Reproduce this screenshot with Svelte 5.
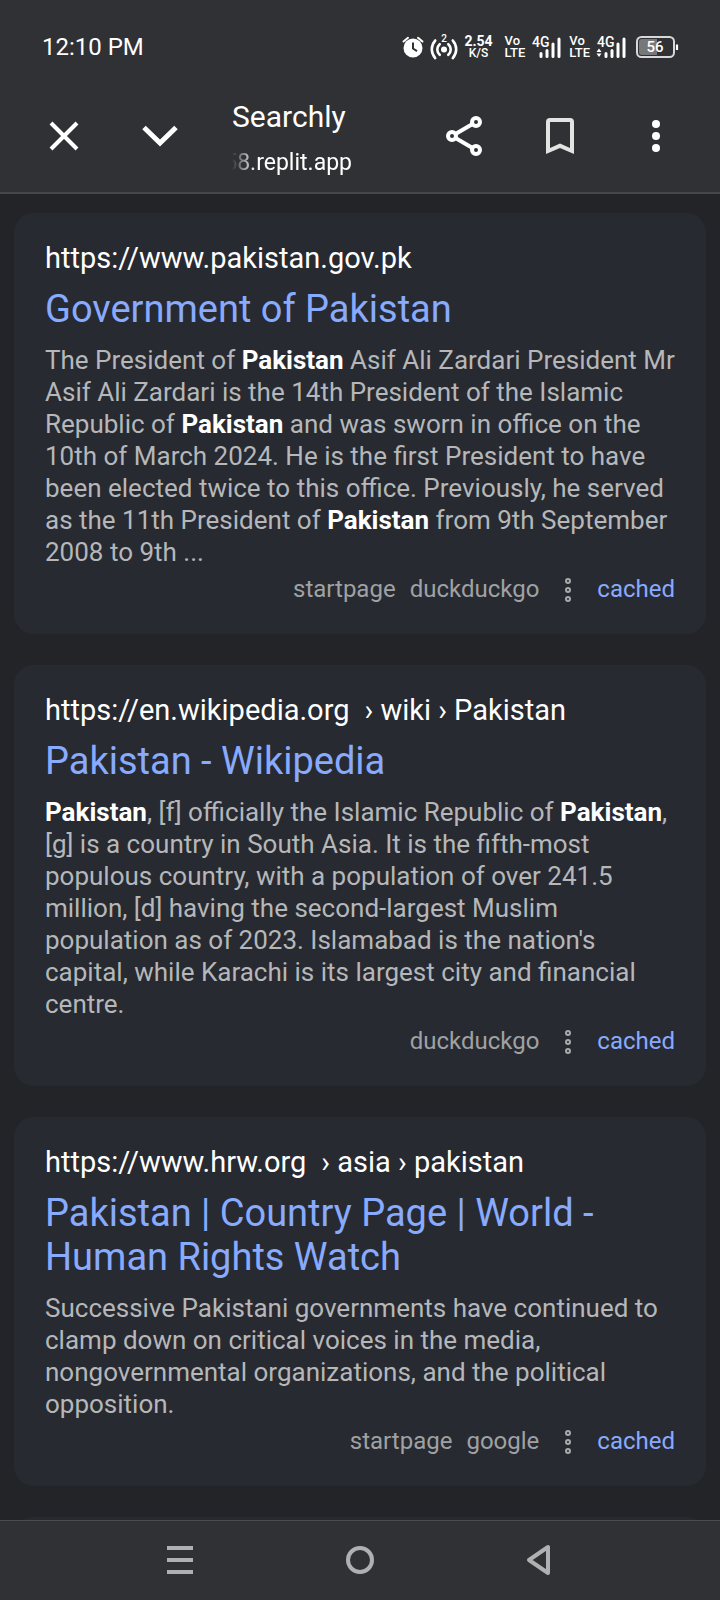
<!-- Search results page inside an in-app browser, with status and navigation bars -->
<script>
  const results = [
    {
      url: 'https://www.pakistan.gov.pk',
      path: '',
      title: 'Government of Pakistan',
      text: [
        { t: 'The President of ' },
        { t: 'Pakistan', hit: true },
        { t: ' Asif Ali Zardari President Mr Asif Ali Zardari is the 14th President of the Islamic Republic of ' },
        { t: 'Pakistan', hit: true },
        { t: ' and was sworn in office on the 10th of March 2024. He is the first President to have been elected twice to this office. Previously, he served as the 11th President of ' },
        { t: 'Pakistan', hit: true },
        { t: ' from 9th September 2008 to 9th ...' }
      ],
      engines: ['startpage', 'duckduckgo']
    },
    {
      url: 'https://en.wikipedia.org',
      path: '› wiki › Pakistan',
      title: 'Pakistan - Wikipedia',
      text: [
        { t: 'Pakistan', hit: true },
        { t: ', [f] officially the Islamic Republic of ' },
        { t: 'Pakistan', hit: true },
        { t: ", [g] is a country in South Asia. It is the fifth-most populous country, with a population of over 241.5 million, [d] having the second-largest Muslim population as of 2023. Islamabad is the nation's capital, while Karachi is its largest city and financial centre." }
      ],
      engines: ['duckduckgo']
    },
    {
      url: 'https://www.hrw.org',
      path: '› asia › pakistan',
      title: 'Pakistan | Country Page | World - Human Rights Watch',
      text: [
        { t: 'Successive Pakistani governments have continued to clamp down on critical voices in the media, nongovernmental organizations, and the political opposition.' }
      ],
      engines: ['startpage', 'google']
    }
  ];

  // second SIM shows the data activity arrows
  const sims = [{ data: false }, { data: true }];
</script>

<div class="screen">
  <header>
    <div class="status">
      <time>12:10 PM</time>
      <div class="status-icons">
        <svg class="alarm" width="22" height="22" viewBox="0 0 22 22">
          <circle cx="11" cy="12" r="9.5" fill="#fff" />
          <path d="M1.5 5.5 6 1.8M20.5 5.5 16 1.8" stroke="#fff" stroke-width="2" stroke-linecap="round" />
          <path d="M11 6.5v6l4 2.6" fill="none" stroke="#303134" stroke-width="2" />
        </svg>
        <svg class="hotspot" width="28" height="26" viewBox="0 0 28 26">
          <circle cx="14" cy="15.5" r="3" fill="#fff" />
          <path d="M9.7 10.2a7 7 0 0 0 0 10.6M18.3 10.2a7 7 0 0 1 0 10.6M5.2 6.5a13 13 0 0 0 0 17.5M22.8 6.5a13 13 0 0 1 0 17.5" fill="none" stroke="#fff" stroke-width="2.6" stroke-linecap="round" />
          <text x="14" y="8" text-anchor="middle" font-size="10" font-weight="500" fill="#fff">2</text>
        </svg>
        <div class="speed"><b>2.54</b><span>K/S</span></div>
        {#each sims as sim}
          <div class="volte"><span>Vo</span><span>LTE</span></div>
          <svg class="signal" width="30" height="24" viewBox="0 0 30 24">
            <text x="1" y="12" font-size="14" font-weight="500" fill="#fff">4G</text>
            <path d="M10 18.5v3M16 15.5v6M22 9v12.5M28 4v17.5" stroke="#fff" stroke-width="3" stroke-linecap="round" />
            {#if sim.data}
              <path d="M3 13.5l2.5 3.5h-5zM3 22l2.5-3.5h-5z" fill="#fff" />
            {/if}
          </svg>
        {/each}
        <svg class="battery" width="44" height="22" viewBox="0 0 44 22">
          <path d="M6 3h15v16H6a3 3 0 0 1-3-3V6a3 3 0 0 1 3-3z" fill="#77787a" />
          <rect x="1" y="1" width="37" height="20" rx="4.5" fill="none" stroke="#d8d8d9" stroke-width="2" />
          <path d="M41 8.5v5.5" stroke="#fff" stroke-width="2.2" />
          <text x="19" y="16" text-anchor="middle" font-size="15" font-weight="500" fill="#fff">56</text>
        </svg>
      </div>
    </div>

    <div class="toolbar">
      <button aria-label="Close">
        <svg width="48" height="48" viewBox="0 0 48 48">
          <path d="M11 11l26 26M37 11 11 37" stroke="#fff" stroke-width="4" />
        </svg>
      </button>
      <button aria-label="Minimize">
        <svg width="48" height="48" viewBox="0 0 48 48">
          <path d="M8 15.5 24 31l16-15.5" fill="none" stroke="#fff" stroke-width="5" />
        </svg>
      </button>
      <div class="page-info">
        <h1>Searchly</h1>
        <p><span>58.replit.app</span></p>
      </div>
      <button aria-label="Share">
        <svg width="48" height="48" viewBox="0 0 48 48">
          <g fill="none" stroke="#fff" stroke-width="4">
            <path d="M36 10 12 24l24 14" />
            <g fill="#303134">
              <circle cx="36" cy="10" r="4" />
              <circle cx="12" cy="24" r="4" />
              <circle cx="36" cy="38" r="4" />
            </g>
          </g>
        </svg>
      </button>
      <button aria-label="Bookmark">
        <svg width="48" height="48" viewBox="0 0 48 48">
          <path d="M14 6h20a4 4 0 0 1 4 4v32l-14-6-14 6V10a4 4 0 0 1 4-4zM14 10v26l10-4.4L34 36V10z" fill="#e3e3e3" fill-rule="evenodd" />
        </svg>
      </button>
      <button aria-label="More options">
        <svg width="48" height="48" viewBox="0 0 48 48" fill="#fff">
          <circle cx="24" cy="12" r="4" />
          <circle cx="24" cy="24" r="4" />
          <circle cx="24" cy="36" r="4" />
        </svg>
      </button>
    </div>
  </header>

  <main>
    {#each results as r}
      <article>
        <a class="url" href={r.url}>{r.url}{#if r.path}<span>{r.path}</span>{/if}</a>
        <h3><a href={r.url}>{r.title}</a></h3>
        <p class="content">
          {#each r.text as part}{#if part.hit}<b>{part.t}</b>{:else}{part.t}{/if}{/each}
        </p>
        <div class="engines">
          {#each r.engines as engine}
            <span>{engine}</span>
          {/each}
          <svg width="8" height="26" viewBox="0 0 8 26" fill="none" stroke="#a9a9ab" stroke-width="2">
            <circle cx="4" cy="5" r="2" />
            <circle cx="4" cy="14" r="2" />
            <circle cx="4" cy="23" r="2" />
          </svg>
          <a href={r.url}>cached</a>
        </div>
      </article>
    {/each}
    <article></article>
  </main>

  <nav>
    <button aria-label="Recent apps">
      <svg width="32" height="32" viewBox="0 0 32 32">
        <path d="M3 4h26M3 16h26M3 28h26" stroke="#b0b0b2" stroke-width="4" />
      </svg>
    </button>
    <button aria-label="Home">
      <svg width="32" height="32" viewBox="0 0 32 32">
        <circle cx="16" cy="16" r="12" fill="none" stroke="#b0b0b2" stroke-width="4" />
      </svg>
    </button>
    <button aria-label="Back">
      <svg width="32" height="32" viewBox="0 0 32 32">
        <path d="M24 3v26L5 16z" fill="none" stroke="#b0b0b2" stroke-width="4" stroke-linejoin="round" />
      </svg>
    </button>
  </nav>
</div>

<style>
  :global(body) { background: #222428; }

  .screen {
    display: flex;
    flex-direction: column;
    height: 100vh;
    overflow: hidden;
    font-family: Roboto, "Liberation Sans", sans-serif;
    color: #fff;
  }

  h1, h3, p { margin: 0; font-weight: 400; }
  a { color: #8af; text-decoration: none; }
  svg { display: block; flex-shrink: 0; }

  button {
    display: flex; align-items: center; justify-content: center;
    padding: 0; border: none; background: none; cursor: pointer;
  }

  header {
    flex-shrink: 0;
    background: #303134;
    border-bottom: 2px solid #46474b;
  }

  /* ── Status bar ────────────────────────────────────── */
  .status {
    display: flex; justify-content: space-between; align-items: center;
    height: 66px;
    padding: 14px 40px 0 42px;
  }
  .status time { font-size: 24px; line-height: 28px; }
  .status-icons { display: flex; align-items: center; gap: 6px; }
  .speed, .volte { display: flex; flex-direction: column; font-weight: 500; }
  .speed { align-items: center; margin-right: 4px; font-size: 12px; line-height: 12px; }
  .speed b { font-size: 14px; font-weight: 700; }
  .volte { margin-left: 2px; font-size: 13px; line-height: 12px; }
  .battery { margin-left: 4px; }

  /* ── Browser toolbar ───────────────────────────────── */
  .toolbar {
    display: flex; align-items: center;
    height: 112px;
    padding: 0 16px;
  }
  .toolbar button { width: 96px; height: 96px; }
  .page-info { flex: 1; min-width: 0; padding: 10px 24px 0; }
  .page-info h1 { font-size: 30px; line-height: 44px; }
  /* long hosts keep their end visible and fade out at the start */
  .page-info p {
    display: flex; justify-content: flex-end;
    max-width: 120px;
    overflow: hidden;
    font-size: 23px; line-height: 48px;
    mask-image: linear-gradient(to right, transparent, #000 24px);
  }

  /* ── Results ───────────────────────────────────────── */
  main {
    flex: 1;
    min-height: 0;
    overflow: hidden;
    display: flex; flex-direction: column; gap: 31px;
    padding: 19px 14px 0;
  }

  article {
    flex-shrink: 0;
    padding: 27px 31px 29px;
    border-radius: 20px;
    background: #272a31;
  }

  .url { display: block; color: #fff; font-size: 29px; line-height: 36px; }
  .url span { margin-left: 15px; }
  h3 { margin: 11px 0 13px; font-size: 38px; line-height: 44px; }
  .content { color: #b6b7b9; font-size: 26px; line-height: 32px; }
  .content b { color: #fff; font-weight: 700; }

  .engines {
    display: flex; justify-content: flex-end; align-items: center;
    margin-top: 5px;
    font-size: 24px; line-height: 32px; color: #a0a1a3;
  }
  .engines span + span { margin-left: 14px; }
  .engines svg { margin: 0 25px; }

  /* ── System navigation ─────────────────────────────── */
  nav {
    flex-shrink: 0;
    display: flex; justify-content: center;
    padding-bottom: 1px;
    border-top: 1px solid #4b4c4f;
    background: #303134;
  }
  nav button { width: 25%; height: 78px; }
</style>
